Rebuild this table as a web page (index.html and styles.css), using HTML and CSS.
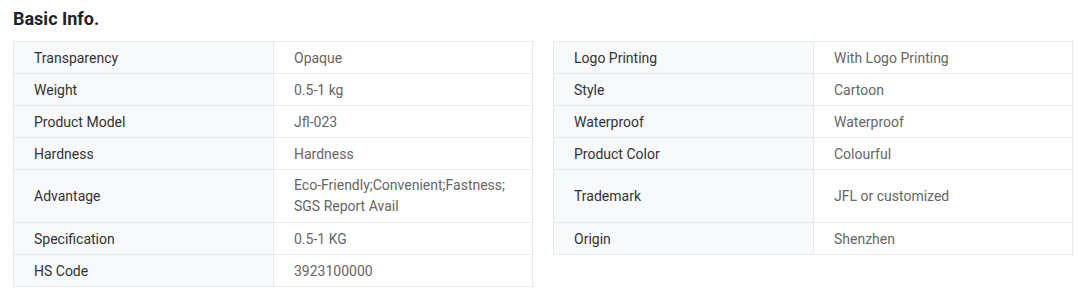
FILE: index.html
```html
<!DOCTYPE html>
<html>
<head>
<meta charset="utf-8">
<link rel="stylesheet" href="styles.css">
</head>
<body>
<div class="basic">
  <h2 class="title">Basic Info.</h2>
  <div class="tables">
    <table class="info">
      <tr><td class="k">Transparency</td><td class="v">Opaque</td></tr>
      <tr><td class="k">Weight</td><td class="v">0.5-1 kg</td></tr>
      <tr><td class="k">Product Model</td><td class="v">Jfl-023</td></tr>
      <tr><td class="k">Hardness</td><td class="v">Hardness</td></tr>
      <tr class="tall"><td class="k">Advantage</td><td class="v">Eco-Friendly;Convenient;Fastness;<br>SGS Report Avail</td></tr>
      <tr><td class="k">Specification</td><td class="v">0.5-1 KG</td></tr>
      <tr><td class="k">HS Code</td><td class="v">3923100000</td></tr>
    </table>
    <table class="info">
      <tr><td class="k">Logo Printing</td><td class="v">With Logo Printing</td></tr>
      <tr><td class="k">Style</td><td class="v">Cartoon</td></tr>
      <tr><td class="k">Waterproof</td><td class="v">Waterproof</td></tr>
      <tr><td class="k">Product Color</td><td class="v">Colourful</td></tr>
      <tr class="tall"><td class="k">Trademark</td><td class="v">JFL or customized</td></tr>
      <tr><td class="k">Origin</td><td class="v">Shenzhen</td></tr>
    </table>
  </div>
</div>
</body>
</html>
```

FILE: styles.css
```css
html, body {
  margin: 0;
  padding: 0;
  background: #fff;
}
body {
  font-family: Roboto, "Liberation Sans", Arial, sans-serif;
  font-size: 14px;
}
.basic {
  padding: 0 9px 0 13px;
}
.title {
  margin: 7px 0 10px;
  font-size: 18px;
  line-height: 24px;
  font-weight: 700;
  color: #222;
}
.tables {
  display: flex;
  gap: 20px;
  align-items: flex-start;
}
.info {
  width: 520px;
  border-collapse: collapse;
  table-layout: fixed;
  border: 1px solid #e6e9ef;
}
.info td {
  border: 1px solid #e6e9ef;
  padding: 6px 20px 4px;
  line-height: 21px;
  height: 21px;
  vertical-align: middle;
}
.info .tall td {
  height: 42px;
  padding: 5px 20px;
}
.k {
  width: 219px;
  background: #f8f9fb;
  color: #333;
}
.v {
  background: #fff;
  color: #666;
}
```
